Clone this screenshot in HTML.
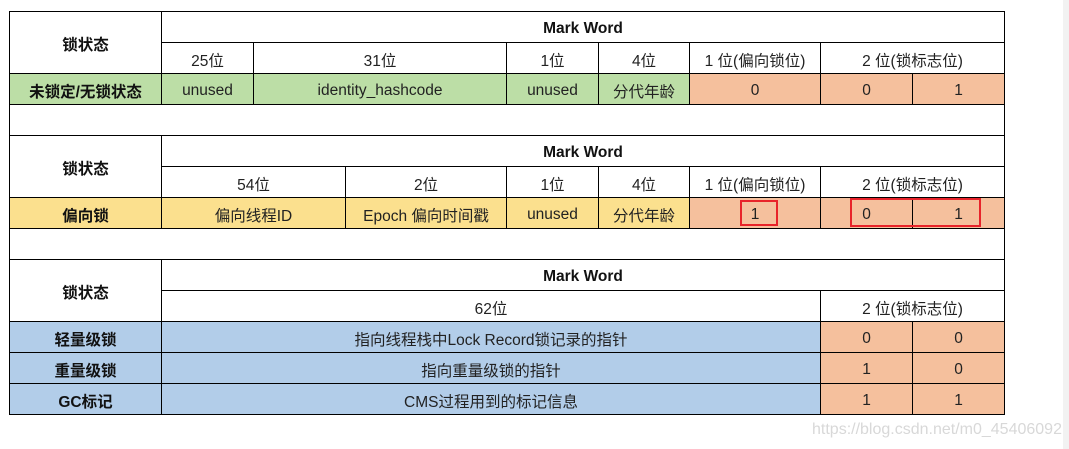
<!DOCTYPE html><html><head><meta charset="utf-8"><style>
body{margin:0;width:1069px;height:449px;background:#fff;position:relative;overflow:hidden;font-family:"Liberation Sans","Noto Sans CJK SC",sans-serif;font-size:15.5px;color:#222}
.c{position:absolute;border:1px solid #000;box-sizing:border-box;display:flex;align-items:center;justify-content:center;white-space:nowrap;padding-top:3px}
.b{font-weight:bold;color:#111}
.g{background:#bcdea6}.y{background:#fbe08e}.o{background:#f5c09d}.bl{background:#b2cde9}
.r{position:absolute;border:2px solid #e8232a;box-sizing:border-box}
.strip{position:absolute;left:1063px;top:0;width:6px;height:449px;background:#f2f2f2}
.wm{position:absolute;left:812px;top:421px;color:#d8d8d8;font-size:16px}
</style></head><body>
<div class="c b" style="left:9px;top:11px;width:153px;height:63px">锁状态</div>
<div class="c b" style="left:161px;top:11px;width:844px;height:32px">Mark Word</div>
<div class="c" style="left:161px;top:42px;width:93px;height:32px">25位</div>
<div class="c" style="left:253px;top:42px;width:254px;height:32px">31位</div>
<div class="c" style="left:506px;top:42px;width:93px;height:32px">1位</div>
<div class="c" style="left:598px;top:42px;width:92px;height:32px">4位</div>
<div class="c" style="left:689px;top:42px;width:132px;height:32px">1 位(偏向锁位)</div>
<div class="c" style="left:820px;top:42px;width:185px;height:32px">2 位(锁标志位)</div>
<div class="c b g" style="left:9px;top:73px;width:153px;height:32px">未锁定/无锁状态</div>
<div class="c g" style="left:161px;top:73px;width:93px;height:32px">unused</div>
<div class="c g" style="left:253px;top:73px;width:254px;height:32px">identity_hashcode</div>
<div class="c g" style="left:506px;top:73px;width:93px;height:32px">unused</div>
<div class="c g" style="left:598px;top:73px;width:92px;height:32px">分代年龄</div>
<div class="c o" style="left:689px;top:73px;width:132px;height:32px">0</div>
<div class="c o" style="left:820px;top:73px;width:93px;height:32px">0</div>
<div class="c o" style="left:912px;top:73px;width:93px;height:32px">1</div>
<div class="c" style="left:9px;top:104px;width:996px;height:32px"></div>
<div class="c b" style="left:9px;top:135px;width:153px;height:63px">锁状态</div>
<div class="c b" style="left:161px;top:135px;width:844px;height:32px">Mark Word</div>
<div class="c" style="left:161px;top:166px;width:185px;height:32px">54位</div>
<div class="c" style="left:345px;top:166px;width:162px;height:32px">2位</div>
<div class="c" style="left:506px;top:166px;width:93px;height:32px">1位</div>
<div class="c" style="left:598px;top:166px;width:92px;height:32px">4位</div>
<div class="c" style="left:689px;top:166px;width:132px;height:32px">1 位(偏向锁位)</div>
<div class="c" style="left:820px;top:166px;width:185px;height:32px">2 位(锁标志位)</div>
<div class="c b y" style="left:9px;top:197px;width:153px;height:32px">偏向锁</div>
<div class="c y" style="left:161px;top:197px;width:185px;height:32px">偏向线程ID</div>
<div class="c y" style="left:345px;top:197px;width:162px;height:32px">Epoch 偏向时间戳</div>
<div class="c y" style="left:506px;top:197px;width:93px;height:32px">unused</div>
<div class="c y" style="left:598px;top:197px;width:92px;height:32px">分代年龄</div>
<div class="c o" style="left:689px;top:197px;width:132px;height:32px">1</div>
<div class="c o" style="left:820px;top:197px;width:93px;height:32px">0</div>
<div class="c o" style="left:912px;top:197px;width:93px;height:32px">1</div>
<div class="c" style="left:9px;top:228px;width:996px;height:32px"></div>
<div class="c b" style="left:9px;top:259px;width:153px;height:63px">锁状态</div>
<div class="c b" style="left:161px;top:259px;width:844px;height:32px">Mark Word</div>
<div class="c" style="left:161px;top:290px;width:660px;height:32px">62位</div>
<div class="c" style="left:820px;top:290px;width:185px;height:32px">2 位(锁标志位)</div>
<div class="c b bl" style="left:9px;top:321px;width:153px;height:32px">轻量级锁</div>
<div class="c bl" style="left:161px;top:321px;width:660px;height:32px">指向线程栈中Lock Record锁记录的指针</div>
<div class="c o" style="left:820px;top:321px;width:93px;height:32px">0</div>
<div class="c o" style="left:912px;top:321px;width:93px;height:32px">0</div>
<div class="c b bl" style="left:9px;top:352px;width:153px;height:32px">重量级锁</div>
<div class="c bl" style="left:161px;top:352px;width:660px;height:32px">指向重量级锁的指针</div>
<div class="c o" style="left:820px;top:352px;width:93px;height:32px">1</div>
<div class="c o" style="left:912px;top:352px;width:93px;height:32px">0</div>
<div class="c b bl" style="left:9px;top:383px;width:153px;height:32px">GC标记</div>
<div class="c bl" style="left:161px;top:383px;width:660px;height:32px">CMS过程用到的标记信息</div>
<div class="c o" style="left:820px;top:383px;width:93px;height:32px">1</div>
<div class="c o" style="left:912px;top:383px;width:93px;height:32px">1</div>
<div class="r" style="left:740px;top:200px;width:38px;height:26px"></div>
<div class="r" style="left:850px;top:198px;width:131px;height:29px"></div>
<div class="strip"></div>
<div class="wm">https://blog.csdn.net/m0_45406092</div>
</body></html>
